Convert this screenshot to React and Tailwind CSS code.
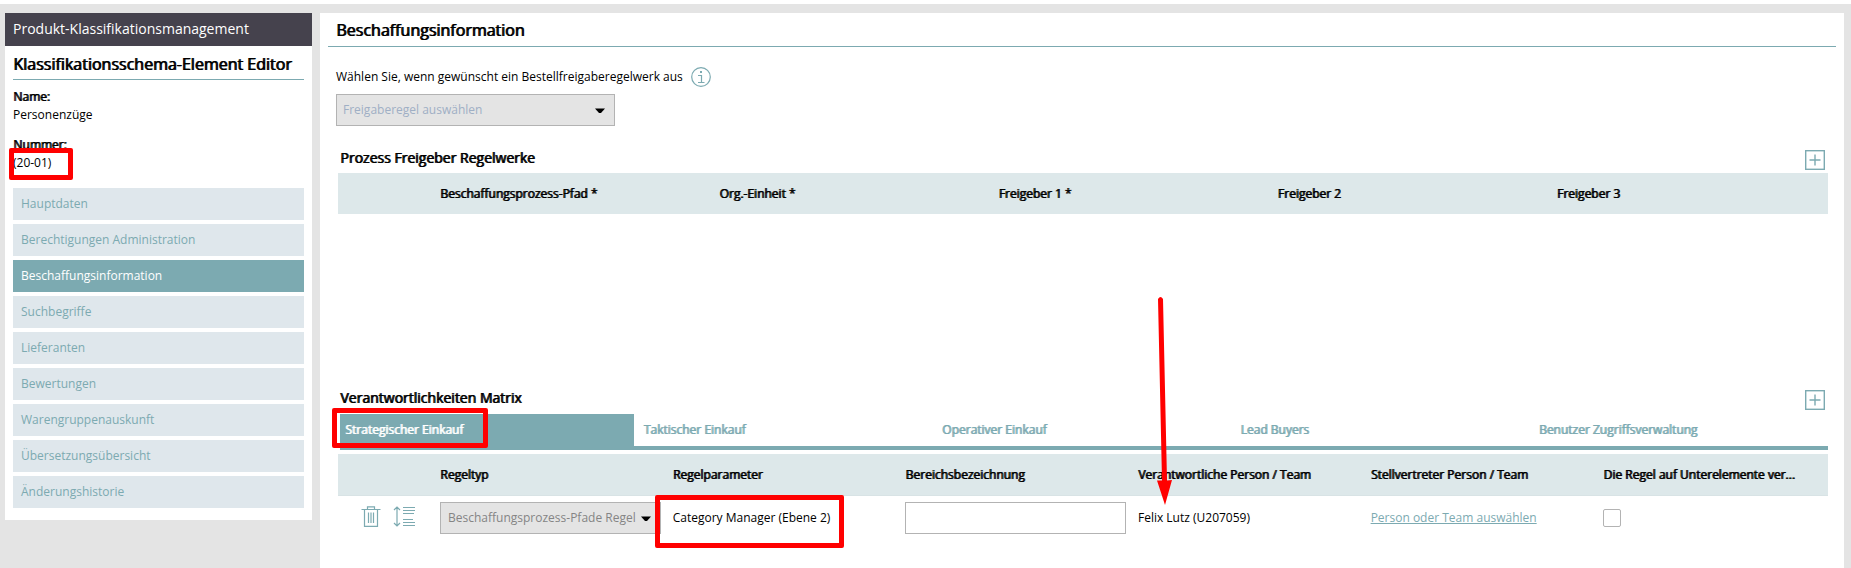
import React from "react";

const NAV_ITEMS = [
  "Hauptdaten",
  "Berechtigungen Administration",
  "Beschaffungsinformation",
  "Suchbegriffe",
  "Lieferanten",
  "Bewertungen",
  "Warengruppenauskunft",
  "Übersetzungsübersicht",
  "Änderungshistorie",
];

const APPROVER_COLUMNS = [
  "Beschaffungsprozess-Pfad *",
  "Org.-Einheit *",
  "Freigeber 1 *",
  "Freigeber 2",
  "Freigeber 3",
];

const TABS = [
  "Strategischer Einkauf",
  "Taktischer Einkauf",
  "Operativer Einkauf",
  "Lead Buyers",
  "Benutzer Zugriffsverwaltung",
];

const HEAVY = "font-normal [text-shadow:1px_0_0_currentColor]";

function Highlight({ className }) {
  return (
    <span
      aria-hidden="true"
      className={`pointer-events-none absolute z-10 rounded-xs border-5 border-[#ff0000] ${className}`}
    />
  );
}

function Arrow() {
  return (
    <svg
      aria-hidden="true"
      className="pointer-events-none absolute -top-[160px] left-[26px] z-10"
      width="17"
      height="212"
      viewBox="0 0 17 212"
      fill="#ff0000"
    >
      <path d="M2 5Q4.500 1 7 5L11 186.500L16 186L9 211L1 186.500L6 186.500Z" />
    </svg>
  );
}

function InfoIcon() {
  return (
    <svg width="20" height="20" viewBox="0 0 20 20" fill="none" stroke="#7caab1" aria-hidden="true">
      <circle cx="10" cy="10" r="9.300" strokeWidth="1.200" />
      <path d="M7 8.500H10.500V15.500M7 15.500H13.500" strokeWidth="1.200" />
      <path d="M9 4H11V6H9Z" fill="#7caab1" stroke="none" />
    </svg>
  );
}

function PlusIcon() {
  return (
    <svg width="20" height="20" viewBox="0 0 20 20" fill="none" stroke="#7caab1" aria-hidden="true">
      <rect x=".7" y=".7" width="18.600" height="18.600" strokeWidth="1.400" />
      <path d="M10 4.500V15.500M4.500 10H15.500" strokeWidth="1.400" />
    </svg>
  );
}

function TrashIcon() {
  return (
    <svg width="20" height="21" viewBox="0 0 20 21" fill="none" stroke="#7caab1" strokeWidth="1.200" aria-hidden="true">
      <path d="M.5 3.500H19.500M6.500 3.500V.8H13.500V3.500M3.500 3.500V20.300H16.500V3.500" />
      <path d="M7.500 6.500V17M10 6.500V17M12.500 6.500V17" />
    </svg>
  );
}

function SortIcon() {
  return (
    <svg width="22" height="21" viewBox="0 0 22 21" fill="none" stroke="#7caab1" strokeWidth="1.200" aria-hidden="true">
      <path d="M4 1V20M1 4L4 1L7 4M1 17L4 20L7 17" />
      <path d="M10 1.500H22M10 4.500H22M10 7.500H21M10 13.500H20M10 16.500H22M10 19.500H22" />
    </svg>
  );
}

function Select({ label, value, className }) {
  return (
    <div className="relative">
      <select
        aria-label={label}
        className={`block h-8 w-full appearance-none border border-[#b3b3b3] bg-[#e4e4e4] pr-5 outline-none ${className}`}
      >
        <option>{value}</option>
      </select>
      <svg
        aria-hidden="true"
        className="pointer-events-none absolute top-[14px] right-[10px]"
        width="10"
        height="6"
        viewBox="0 0 10 6"
      >
        <path d="M0 .5H10L6 5H4Z" fill="#000" />
      </svg>
    </div>
  );
}

function SectionHead({ title, action }) {
  return (
    <div className="flex h-6 items-center justify-between pr-[3px] pl-0.5">
      <h3 className={`text-sm ${HEAVY}`}>{title}</h3>
      <button type="button" aria-label={action} className="pt-1">
        <PlusIcon />
      </button>
    </div>
  );
}

function Sidebar() {
  return (
    <aside className="w-[307px] shrink-0 bg-white pb-3">
      <h1 className="h-[33px] bg-[#45424d] px-2 text-sm leading-8 text-white">
        Produkt-Klassifikationsmanagement
      </h1>
      <div className="px-2">
        <h2 className={`h-[34px] border-b border-[#7caab1] text-base leading-9 ${HEAVY}`}>
          Klassifikationsschema-Element Editor
        </h2>
        <dl className="pt-2 leading-[18px]">
          <dt className={HEAVY}>Name:</dt>
          <dd>Personenzüge</dd>
          <dt className={`mt-3 ${HEAVY}`}>Nummer:</dt>
          <dd className="relative">
            (20-01)
            <Highlight className="-top-1.5 -left-1 h-8 w-16" />
          </dd>
        </dl>
        <nav className="mt-4 flex flex-col gap-1">
          {NAV_ITEMS.map((item) => (
            <a
              key={item}
              href="#"
              className={`h-8 px-2 leading-8 ${
                item === "Beschaffungsinformation"
                  ? "bg-[#7caab1] text-white"
                  : "bg-[#dfe7ec] text-[#7caab1]"
              }`}
            >
              {item}
            </a>
          ))}
        </nav>
      </div>
    </aside>
  );
}

function ApproverTable() {
  return (
    <table className="w-full table-fixed text-left">
      <thead className="bg-[#dde8ea]">
        <tr className="h-[41px]">
          <th className="w-[94px]" aria-label="Aktionen" />
          {APPROVER_COLUMNS.map((c) => (
            <th key={c} className={`px-2 ${HEAVY}`}>
              {c}
            </th>
          ))}
        </tr>
      </thead>
    </table>
  );
}

function MatrixTable() {
  const th = `relative pt-0.5 pl-2 ${HEAVY}`;
  return (
    <table className="mt-1 w-full table-fixed text-left">
      <thead className="border-b border-[#d8e3e5] bg-[#dde8ea]">
        <tr className="h-[41px]">
          <th className="w-[94px]" aria-label="Aktionen" />
          <th className={th}>Regeltyp</th>
          <th className={th}>Regelparameter</th>
          <th className={th}>Bereichsbezeichnung</th>
          <th className={th}>
            Verantwortliche Person / Team
            <Arrow />
          </th>
          <th className={th}>Stellvertreter Person / Team</th>
          <th className={th}>Die Regel auf Unterelemente ver...</th>
        </tr>
      </thead>
      <tbody>
        <tr className="h-[46px]">
          <td>
            <div className="flex gap-3 pb-1 pl-[23px]">
              <button type="button" aria-label="Löschen">
                <TrashIcon />
              </button>
              <button type="button" aria-label="Sortieren">
                <SortIcon />
              </button>
            </div>
          </td>
          <td className="pr-1 pl-2">
            <Select label="Regeltyp" value="Beschaffungsprozess-Pfade Regel" className="pl-[7px] text-[#858585]" />
          </td>
          <td className="relative pl-2">
            Category Manager (Ebene 2)
            <Highlight className="-top-px -left-2.5 h-[53px] w-[189px]" />
          </td>
          <td className="pr-1 pl-2">
            <input
              aria-label="Bereichsbezeichnung"
              className="block h-8 w-full border border-[#b3b3b3] bg-white px-2 outline-none"
            />
          </td>
          <td className="pl-2">Felix Lutz (U207059)</td>
          <td className="pl-2">
            <a href="#" className="text-[#7caab1] underline">
              Person oder Team auswählen
            </a>
          </td>
          <td className="pl-2">
            <input
              type="checkbox"
              aria-label="Die Regel auf Unterelemente vererben"
              className="block size-[18px] appearance-none rounded-xs border border-[#b3b3b3] bg-white"
            />
          </td>
        </tr>
      </tbody>
    </table>
  );
}

export default function App() {
  return (
    <div className="flex min-h-screen flex-col border-t-4 border-white bg-[#e4e4e4] font-['Open_Sans',sans-serif] text-xs text-black">
      <div className="flex grow items-start gap-2 pt-[9px] pr-[7px] pl-[5px]">
        <Sidebar />
        <main className="min-w-0 grow self-stretch bg-white px-2">
          <h2 className={`h-[34px] border-b border-[#7caab1] px-2 text-base leading-[34px] ${HEAVY}`}>
            Beschaffungsinformation
          </h2>
          <div className="flex items-center gap-2 pt-5 pl-2">
            <p>Wählen Sie, wenn gewünscht ein Bestellfreigaberegelwerk aus</p>
            <button type="button" aria-label="Information">
              <InfoIcon />
            </button>
          </div>
          <div className="mt-[7px] ml-2 w-[279px]">
            <Select label="Freigaberegel" value="Freigaberegel auswählen" className="pl-[6px] text-[#9fafc5]" />
          </div>
          <section className="mt-5 min-h-[240px] pr-2 pl-2.5">
            <SectionHead title="Prozess Freigeber Regelwerke" action="Regelwerk hinzufügen" />
            <div className="pt-[3px]">
              <ApproverTable />
            </div>
          </section>
          <section className="pr-2 pb-4 pl-2.5">
            <SectionHead title="Verantwortlichkeiten Matrix" action="Verantwortlichkeit hinzufügen" />
            <div className="relative ml-0.5 flex gap-1 border-b-4 border-[#7caab1] pt-1">
              {TABS.map((tab, i) => (
                <button
                  key={tab}
                  type="button"
                  className={`h-8 flex-1 px-[5px] text-left ${HEAVY} ${
                    i === 0 ? "bg-[#7caab1] text-white" : "text-[#7caab1]"
                  }`}
                >
                  {tab}
                </button>
              ))}
              <Highlight className="-top-0.5 -left-2 h-10 w-[156px]" />
            </div>
            <MatrixTable />
          </section>
        </main>
      </div>
    </div>
  );
}
